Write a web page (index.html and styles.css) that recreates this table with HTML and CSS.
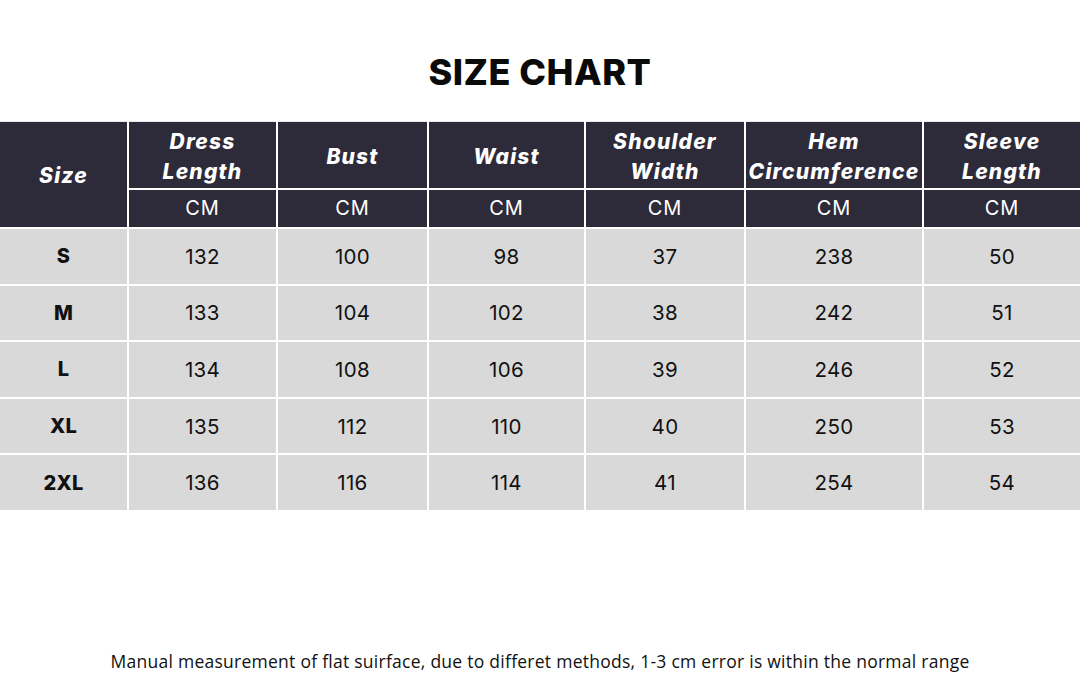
FILE: index.html
```html
<!DOCTYPE html>
<html>
<head>
<meta charset="utf-8">
<link rel="stylesheet" href="styles.css">
</head>
<body>
<div class="page">
  <h1 class="title">SIZE CHART</h1>
  <table class="chart">
    <colgroup>
      <col class="c1"><col class="c2"><col class="c3"><col class="c4"><col class="c5"><col class="c6"><col class="c7">
    </colgroup>
    <thead>
      <tr class="h1">
        <th rowspan="2" class="size-h">Size</th>
        <th>Dress<br>Length</th>
        <th>Bust</th>
        <th>Waist</th>
        <th>Shoulder<br>Width</th>
        <th>Hem<br>Circumference</th>
        <th>Sleeve<br>Length</th>
      </tr>
      <tr class="h2">
        <td>CM</td><td>CM</td><td>CM</td><td>CM</td><td>CM</td><td>CM</td>
      </tr>
    </thead>
    <tbody>
      <tr><th>S</th><td>132</td><td>100</td><td>98</td><td>37</td><td>238</td><td>50</td></tr>
      <tr><th>M</th><td>133</td><td>104</td><td>102</td><td>38</td><td>242</td><td>51</td></tr>
      <tr><th>L</th><td>134</td><td>108</td><td>106</td><td>39</td><td>246</td><td>52</td></tr>
      <tr><th>XL</th><td>135</td><td>112</td><td>110</td><td>40</td><td>250</td><td>53</td></tr>
      <tr><th>2XL</th><td>136</td><td>116</td><td>114</td><td>41</td><td>254</td><td>54</td></tr>
    </tbody>
  </table>
  <p class="note">Manual measurement of flat suirface, due to differet methods, 1-3 cm error is within the normal range</p>
</div>
</body>
</html>
```
FILE: styles.css
```css
html, body {
  margin: 0;
  padding: 0;
  background: #ffffff;
}
.page {
  width: 1080px;
  height: 699px;
  display: flex;
  flex-direction: column;
  font-family: "Inter", "Liberation Sans", sans-serif;
  color: #111;
}
.title {
  margin: 0;
  padding-top: 50px;
  height: 72px;
  box-sizing: border-box;
  text-align: center;
  font-size: 36px;
  line-height: 44px;
  font-weight: 800;
  letter-spacing: 0.5px;
  color: #0a0a0a;
}
.chart {
  border-collapse: collapse;
  table-layout: fixed;
  width: 1080px;
  margin-top: 49px;
}
.c1 { width: 128px; }
.c2 { width: 149px; }
.c3 { width: 151px; }
.c4 { width: 157px; }
.c5 { width: 160px; }
.c6 { width: 178px; }
.c7 { width: 157px; }
.chart th, .chart td {
  border: 2px solid #ffffff;
  text-align: center;
  padding: 0;
}
.chart tr > :first-child { border-left: none; }
.chart tr > :last-child { border-right: none; }
.chart thead th, .chart thead td {
  background: #2d2a3a;
  color: #ffffff;
}
.h1 th {
  height: 63px;
  padding-top: 3px;
  font-style: italic;
  font-weight: 800;
  font-size: 21px;
  letter-spacing: 1.2px;
  line-height: 30px;
}
.h1 th.size-h { padding-top: 3px; }
.h2 td {
  height: 37px;
  font-size: 20px;
  letter-spacing: 1px;
  font-weight: 400;
  line-height: 37px;
}
.chart thead tr.h1 th { border-top-color: #e8e8e8; border-top-width: 1px; }
.chart tbody th, .chart tbody td {
  background: #d9d9d9;
  height: 54.6px;
  font-size: 20.5px;
  letter-spacing: 0.3px;
  color: #111;
}
.chart tbody th { font-weight: 800; font-size: 20px; }
.chart tbody td { font-weight: 400; }
.chart tbody tr:last-child > * { border-bottom: none; height: 55px; }
.note {
  margin: 0;
  margin-top: auto;
  padding-bottom: 26px;
  text-align: center;
  font-family: "Open Sans", "Liberation Sans", sans-serif;
  font-size: 17.5px;
  letter-spacing: 0.26px;
  color: #111;
}
```
